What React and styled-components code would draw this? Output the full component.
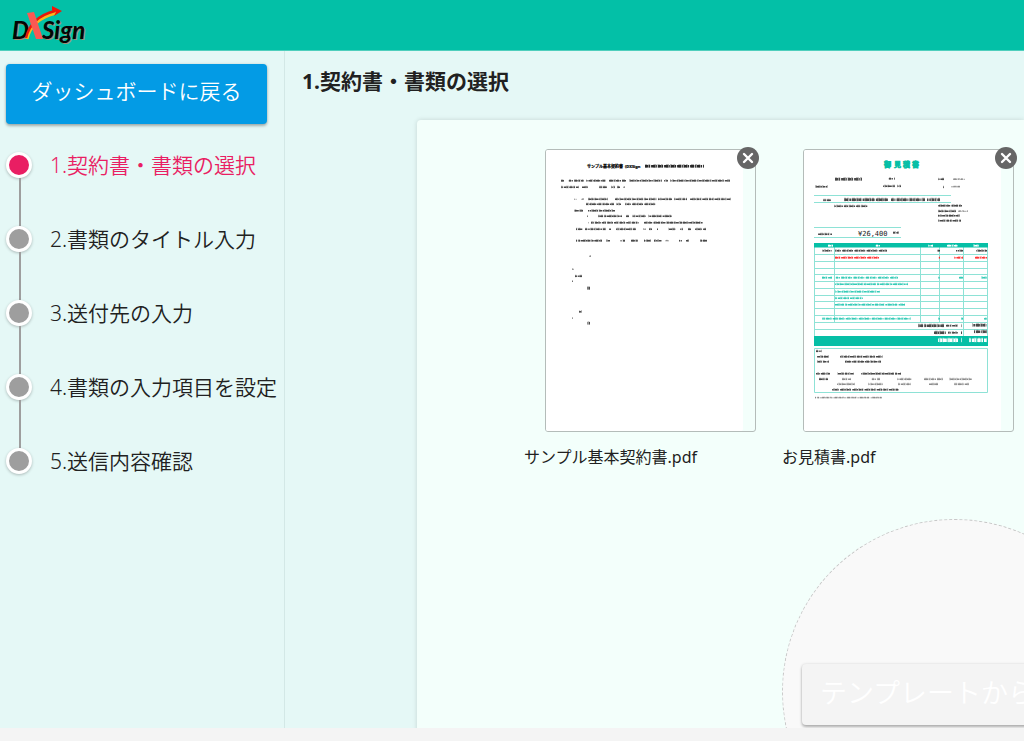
import React from "react";
import styled, { createGlobalStyle } from "styled-components";

const GlobalStyle = createGlobalStyle`
  *, *::before, *::after { box-sizing: border-box; }
  body {
    margin: 0;
    background: #f4f4f4;
    color: #212121;
    font-family: "Noto Sans", "Noto Sans CJK JP", sans-serif;
    font-weight: 350;
    overflow: hidden;
  }
  button { font: inherit; cursor: pointer; }
`;

const Page = styled.div`
  display: grid;
  grid-template-rows: auto minmax(0, 1fr) 13px;
  height: 100vh;
`;

const Header = styled.header`
  display: flex;
  align-items: center;
  height: 51px;
  padding: 0 10px;
  background: #03c0a7;
  border-bottom: 1px solid #4fcfbd;
`;

const HomeLink = styled.a`
  display: flex;
`;

const Body = styled.div`
  display: grid;
  grid-template-columns: 285px minmax(0, 1fr);
  overflow: hidden;
  background: #e5f8f6;
`;

const Sidebar = styled.aside`
  padding: 13px 17px 0 6px;
  border-right: 1px solid #d3e8e6;
`;

const BaseButton = styled.button`
  border: 0;
  border-radius: 4px;
  color: #fff;
  white-space: nowrap;
  box-shadow: 0 2px 3px rgba(0, 0, 0, 0.28), 0 0 3px rgba(0, 0, 0, 0.12);
`;

const BackButton = styled(BaseButton)`
  width: 100%;
  height: 60px;
  padding: 0 0 8px;
  background: #039be5;
  font-size: 21px;
`;

const Steps = styled.ol`
  display: flex;
  flex-direction: column;
  gap: 48px;
  margin: 28px 0 0;
  padding: 0;
  list-style: none;
`;

const Step = styled.li`
  position: relative;
  display: flex;
  align-items: center;
  gap: 18px;
  height: 26px;
  color: ${(p) => (p.$active ? "#e91e63" : "#212121")};
  font-size: 21px;
  line-height: 28px;
  white-space: nowrap;

  &:not(:last-child)::after {
    content: "";
    position: absolute;
    top: 26px;
    left: 13px;
    width: 2px;
    height: 48px;
    background: #9e9e9e;
  }
`;

const Dot = styled.span`
  flex: none;
  width: 26px;
  height: 26px;
  border: 3px solid #fff;
  border-radius: 50%;
  background: ${(p) => (p.$active ? "#e91e63" : "#9e9e9e")};
  box-shadow: 0 1px 3px rgba(0, 0, 0, 0.25);
`;

const Main = styled.main`
  display: flex;
  flex-direction: column;
  overflow: hidden;
`;

const Title = styled.h1`
  margin: 16px 0 0 17px;
  font-size: 21px;
  font-weight: 700;
  line-height: 28px;
`;

const Panel = styled.section`
  flex: 1;
  margin: 25px 0 0 132px;
  padding: 29px 0 0 107px;
  border-radius: 4px 0 0 0;
  background: #f3fffb;
  box-shadow: 0 0 5px rgba(0, 0, 0, 0.14);
`;

const FileGrid = styled.div`
  display: grid;
  grid-template-columns: repeat(2, 258px);
`;

const FileCard = styled.figure`
  margin: 0;
`;

const Thumb = styled.div`
  position: relative;
  width: 211px;
  height: 283px;
  margin-left: 21px;
  border: 1px solid #b4bcb9;
  border-radius: 3px;

  > svg { display: block; }
`;

const CloseButton = styled.button`
  position: absolute;
  top: -3px;
  right: -4px;
  width: 22px;
  height: 22px;
  padding: 0;
  border: 0;
  border-radius: 50%;
  background: #666;

  svg { display: block; }
`;

const FileName = styled.figcaption`
  margin-top: 13px;
  font-size: 16px;
  font-weight: 400;
  line-height: 24px;
`;

const DropCircle = styled.div`
  grid-column: 2;
  display: flex;
  align-items: center;
  justify-content: center;
  width: 345px;
  height: 345px;
  margin-top: 50px;
  padding-top: 6px;
  border: 1px dashed #c6c6c6;
  border-radius: 50%;
  background: #f9f9f9;
`;

const TemplateButton = styled(BaseButton)`
  height: 61px;
  padding: 0 18px 6px;
  background: #f4f4f4;
  font-size: 27px;
`;

const Logo = () => (
  <svg width="90" height="42" viewBox="10 5 90 42" role="img" aria-label="DXSign">
    <g fontFamily="Lato, 'Liberation Sans', sans-serif" fontWeight="700" fontStyle="italic" fontSize="24">
      <g fill="#9b8f78">
        <text x="13" y="41">D</text>
        <text x="43" y="41">Sign</text>
      </g>
      <g fill="#050505">
        <text x="12" y="40">D</text>
        <text x="42" y="40">Sign</text>
      </g>
    </g>
    <path d="M27 40C30 27 40 18 56 14" fill="none" stroke="#ffb51b" strokeWidth="3" />
    <path d="M26 39C29 26 39 16 55 12" fill="none" stroke="#e8170c" strokeWidth="2.400" />
    <path d="M52 7L62 12L54 17L56 13L52 11.500Z" fill="#f21508" />
    <path d="M27 14L34 13L43 40H36Z" fill="#fa5953" />
  </svg>
);

const Close = () => (
  <svg width="22" height="22" viewBox="0 0 22 22" aria-hidden="true">
    <path d="M7 7L15 15M15 7L7 15" stroke="#fff" strokeWidth="2.400" strokeLinecap="round" />
  </svg>
);

const PATTERNS = ["3 .6 1.500 1 4 .7 1 1.200", "1.500 1 2.600 .5 1 1.400 3.400 .8", "4 .8 1.200 .4 3 1.300 2 .6"];

/* Each run is [x, y, width, height] of one stretch of miniature print. */
const Print = ({ runs, color = "#1c1c1c", opacity = 0.8 }) => (
  <g stroke={color} opacity={opacity}>
    {runs.map(([x, y, w, h = 2], i) => (
      <g key={i}>
        <path d={`M${x} ${y + 0.3}h${w}`} strokeWidth={h - 0.5} strokeDasharray={PATTERNS[i % 3]} strokeDashoffset={i * 1.7} />
        <path d={`M${x} ${y}h${w}`} strokeWidth={h + 0.3} strokeDasharray="2.300 1.100 1.800 3.200 3 1.100" strokeDashoffset={i * 2.3} opacity="0.45" />
      </g>
    ))}
  </g>
);

const CONTRACT = [
  [15, 30.5, 3], [22, 30.5, 16], [40, 30.5, 20], [62, 30.5, 18], [83, 30.5, 33], [118, 30.5, 4], [124, 30.5, 60],
  [15, 37, 18], [36, 37, 6], [53, 37, 8], [65, 37, 4], [71, 37, 3], [77, 37, 2, 1],
  [28, 49, 3, 1], [35, 49, 3, 1], [42, 49, 20], [69, 49, 42], [112, 49, 14], [128, 49, 13], [144, 49, 41],
  [40, 54, 28], [70, 54, 5], [79, 54, 31],
  [28, 60.5, 9], [42, 60.5, 27],
  [41, 66, 1, 2], [52, 66, 24], [80, 66, 3], [86, 66, 14], [102, 66, 24],
  [41, 72.5, 2, 1], [45, 72.5, 48], [98, 72.5, 59],
  [30, 79, 7], [39, 79, 21], [63, 79, 2], [70, 79, 20], [97, 79, 3, 1], [103, 79, 3], [111, 79, 1], [122, 79, 8], [134, 79, 3], [142, 79, 3], [149, 79, 11],
  [30, 90.5, 26], [60, 90.5, 4], [74, 90.5, 5], [85, 90.5, 7], [98, 90.5, 7], [108, 90.5, 8], [119, 90.5, 4, 1], [133, 90.5, 3], [140, 90.5, 3], [154, 90.5, 7],
  [43, 106, 2, 1], [26, 119, 2, 1], [29, 126, 7], [26, 131, 1, 2], [41, 138, 3, 3],
  [33, 161.5, 3], [26, 168, 1, 1], [41, 173, 3, 3],
];

const ContractPreview = () => (
  <svg width="209" height="281" viewBox="0 0 209 281" role="img" aria-label="サンプル基本契約書">
    <rect width="197" height="281" rx="2" fill="#fff" />
    <g fontSize="4" fontWeight="700" fill="#000" stroke="#000" strokeWidth=".2">
      <text x="41" y="17.500">サンプル基本契約書</text>
      <text x="79" y="17.500">(DXSign</text>
    </g>
    <Print runs={[[99, 16, 59, 3]]} color="#111" opacity={0.9} />
    <Print runs={CONTRACT} />
  </svg>
);

const GREEN = "#06bfa6";

const QUOTE_BLACK = [
  [31, 29, 27, 3], [84, 28.5, 7], [134, 29, 6], [148, 29, 13, 1],
  [11, 36.5, 13, 2], [79, 36, 12], [93, 36, 4], [139, 37, 1], [147, 36.5, 9, 1],
  [19, 50, 8], [30, 56, 34], [40, 49.5, 45, 3], [87, 49.5, 34, 3], [123, 49.5, 13, 3],
  [134, 55.5, 24], [134, 61, 18], [154, 61, 10, 1], [134, 65.5, 22], [134, 70.5, 23],
  [14, 84, 14], [89, 82.5, 6],
  [18, 100.5, 10], [31, 100.5, 52], [133, 100.5, 3], [152, 100.5, 7], [172, 100.5, 11],
  [114, 175.5, 26, 3], [142, 175.5, 12], [157, 175.5, 1, 3], [168, 175, 15, 3],
  [129, 182.5, 13, 3], [144, 182.5, 10], [157, 182.5, 1, 3], [170, 181.5, 13, 3],
  [12, 201, 6], [13, 206.5, 12], [36, 206.5, 43], [13, 211.5, 12], [41, 211.5, 36],
  [12, 223.5, 14], [33, 223.5, 17], [57, 223.5, 40],
  [15, 229, 9], [28, 239.5, 67], [11, 247.5, 67, 1],
];
const QUOTE_GREY = [
  [38, 229, 9], [67, 229, 9], [93, 229, 15], [119, 229, 20], [145, 229, 23],
  [33, 234, 18], [64, 234, 15], [94, 234, 13], [125, 234, 9], [150, 234, 15],
];
const QUOTE_GREEN = [
  [18, 127.5, 10], [31, 127.5, 63], [134, 127.5, 2], [154, 127.5, 5], [177, 127.5, 6],
  [31, 134, 73], [31, 141.5, 45], [31, 148, 28], [31, 154.5, 70],
  [18, 168.5, 89], [134, 168.5, 2], [157, 168.5, 2], [180, 168.5, 3],
];
const GRID_ROWS = [104, 111, 118, 124, 131, 138, 145, 151, 158, 165, 172];

const QuotePreview = () => (
  <svg width="209" height="281" viewBox="0 0 209 281" role="img" aria-label="御見積書">
    <rect width="197" height="281" rx="2" fill="#fff" />
    <g fontSize="7" fontWeight="700" fill={GREEN} stroke={GREEN} strokeWidth=".7">
      <text x="80" y="17">御</text>
      <text x="90" y="17">見</text>
      <text x="99" y="17">積</text>
      <text x="108" y="17">書</text>
    </g>
    <g fill="none" stroke={GREEN} opacity="0.45">
      <path d="M10 45.500H147M10 52.500H147M10 77.500H97M10 87.500H97" />
      <path d={GRID_ROWS.map((y) => `M10 ${y + 0.5}H184`).join("") + "M10.500 97V193M30.500 97V172M116.500 97V172M135.500 97V172M159.500 97V188M183.500 97V193M10.500 179.500H184"} />
      <path d="M10.500 198.500H183.500V242.500H10.500Z" />
    </g>
    <path d="M10 93H184V97.500H10ZM10 186H184V196H10Z" fill={GREEN} />
    <Print runs={[[24, 95.5, 5], [71, 95.5, 5], [124, 95.5, 5], [142, 95.5, 12], [169, 95.5, 6], [134, 190, 20, 4], [157, 190, 1, 4], [165, 190, 18, 4]]} color="#fff" opacity={1} />
    <text x="54" y="86" fontSize="7" fontWeight="400" fontFamily="'DejaVu Sans Mono', monospace" fill="#222">¥26,400</text>
    <Print runs={QUOTE_BLACK} />
    <Print runs={QUOTE_GREY} opacity={0.5} />
    <Print runs={QUOTE_GREEN} color={GREEN} />
    <Print runs={[[31, 107.5, 44], [134, 107.5, 2], [150, 107.5, 9], [170, 107.5, 13]]} color="#f22" opacity={0.9} />
  </svg>
);

const STEPS = [
  "1.契約書・書類の選択",
  "2.書類のタイトル入力",
  "3.送付先の入力",
  "4.書類の入力項目を設定",
  "5.送信内容確認",
];

const FILES = [
  { name: "サンプル基本契約書.pdf", Preview: ContractPreview },
  { name: "お見積書.pdf", Preview: QuotePreview },
];

export default function App() {
  return (
    <Page>
      <GlobalStyle />
      <Header>
        <HomeLink href="#"><Logo /></HomeLink>
      </Header>
      <Body>
        <Sidebar>
          <BackButton type="button">ダッシュボードに戻る</BackButton>
          <Steps>
            {STEPS.map((label, i) => (
              <Step key={label} $active={i === 0} aria-current={i === 0 ? "step" : undefined}>
                <Dot $active={i === 0} />
                {label}
              </Step>
            ))}
          </Steps>
        </Sidebar>
        <Main>
          <Title>{STEPS[0]}</Title>
          <Panel>
            <FileGrid>
              {FILES.map(({ name, Preview }) => (
                <FileCard key={name}>
                  <Thumb>
                    <Preview />
                    <CloseButton type="button" aria-label={`${name}を削除`}><Close /></CloseButton>
                  </Thumb>
                  <FileName>{name}</FileName>
                </FileCard>
              ))}
              <DropCircle>
                <TemplateButton type="button">テンプレートから選択</TemplateButton>
              </DropCircle>
            </FileGrid>
          </Panel>
        </Main>
      </Body>
    </Page>
  );
}
